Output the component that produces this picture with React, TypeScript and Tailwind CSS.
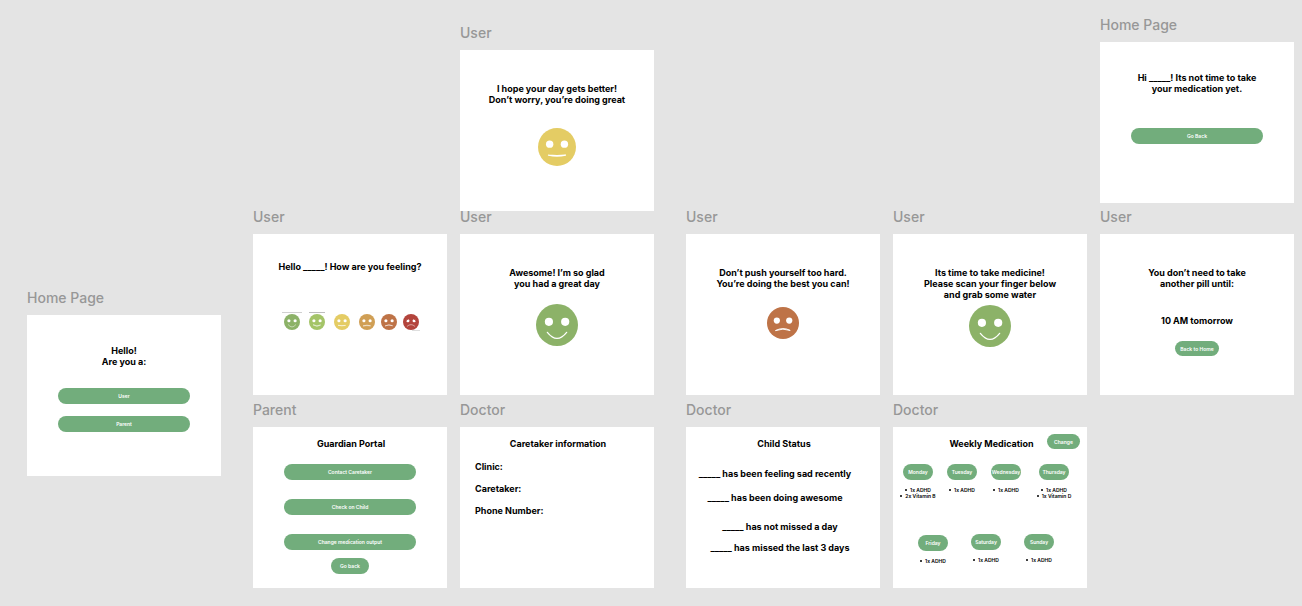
import type { ReactNode } from "react";
import { clsx } from "clsx";

type Mood = "great" | "good" | "okay" | "meh" | "sad" | "awful";

const faces: Record<Mood, { fill: string; mouth: string; label: string }> = {
  great: { fill: "#8cb268", mouth: "M10.8 27 Q20 38.5 29.2 27", label: "Great" },
  good: { fill: "#a4c468", mouth: "M11 27.5 Q20 34.5 29 27.5 Q20 31.5 11 27.5", label: "Good" },
  okay: { fill: "#e4cc64", mouth: "M11 28.5 Q20 29.5 29 28.5 Q20 30.8 11 28.5", label: "Okay" },
  meh: { fill: "#d09f55", mouth: "M11 29.5 Q20 26 29 29.5 Q20 28.5 11 29.5", label: "Not great" },
  sad: { fill: "#be7347", mouth: "M11 29.3 Q20 24.5 29 29.3 Q20 26 11 29.3", label: "Sad" },
  awful: { fill: "#b3443c", mouth: "M10.5 30.5 Q20 22 29.5 30.5", label: "Awful" },
};

function Face({ mood, className }: { mood: Mood; className: string }) {
  const { fill, mouth, label } = faces[mood];
  return (
    <svg viewBox="0 0 40 40" role="img" aria-label={label} className={clsx("block shrink-0", className)}>
      <circle cx="20" cy="20" r="20" fill={fill} />
      <circle cx="12.3" cy="17" r="3.9" fill="#fff" />
      <circle cx="27.8" cy="17" r="3.9" fill="#fff" />
      <path d={mouth} fill="none" stroke="#fff" strokeWidth="1.2" strokeLinecap="round" strokeLinejoin="round" />
      {mood === "awful" && (
        <path d="M7 17 L14 11 M33 17 L26 11" stroke={fill} strokeWidth="2.4" />
      )}
    </svg>
  );
}

function Frame({ name, place, children }: { name: string; place: string; children: ReactNode }) {
  return (
    <section className={clsx("absolute", place)}>
      <h2 className="mb-[7px] text-[14px] leading-5 font-medium text-[#979797]">{name}</h2>
      <div className="flex h-[161px] w-[194px] flex-col items-center bg-white">{children}</div>
    </section>
  );
}

function Title({ className, children }: { className?: string; children: ReactNode }) {
  return (
    <p className={clsx("text-center text-[9px] leading-[11px] font-bold whitespace-nowrap text-black", className)}>
      {children}
    </p>
  );
}

function Pill({ className, children }: { className: string; children: ReactNode }) {
  return (
    <button
      type="button"
      className={clsx(
        "flex shrink-0 items-center justify-center rounded-full bg-[#72ad7c] text-[5px] leading-[6px] font-semibold whitespace-nowrap text-white",
        className,
      )}
    >
      {children}
    </button>
  );
}

function Day({ name, doses, className }: { name: string; doses: string[]; className?: string }) {
  return (
    <div className={clsx("flex w-9 flex-col items-center", className)}>
      <Pill className="h-4 w-[30px]">{name}</Pill>
      <ul className="mt-[7px] text-center text-[5px] leading-[6px] font-semibold whitespace-nowrap text-black">
        {doses.map((dose) => (
          <li key={dose} className="flex items-center justify-center gap-[3px]">
            <span className="size-0.5 rounded-full bg-black" />
            {dose}
          </li>
        ))}
      </ul>
    </div>
  );
}

function MoodButton({ mood, children }: { mood: Mood; children?: ReactNode }) {
  return (
    <button type="button" className="relative">
      <Face mood={mood} className="size-4" />
      {children}
    </button>
  );
}

export default function App() {
  return (
    <main className="relative min-h-screen overflow-hidden bg-[#e4e4e4] font-['Inter',sans-serif]">
      <Frame name="Home Page" place="left-[27px] top-[288px]">
        <Title className="mt-[30px]">
          Hello!
          <br />
          Are you a:
        </Title>
        <Pill className="mt-[21px] h-4 w-[132px]">User</Pill>
        <Pill className="mt-3 h-4 w-[132px]">Parent</Pill>
      </Frame>

      <Frame name="User" place="left-[253px] top-[207px]">
        <Title className="mt-[27px]">Hello _____! How are you feeling?</Title>
        <div className="mt-[42px] flex gap-1.5 pl-[3px]">
          <div className="flex gap-[9px]">
            <MoodButton mood="great">
              <span className="absolute -top-0.5 -left-0.5 h-px w-5 bg-[#d0d0d0]" />
            </MoodButton>
            <MoodButton mood="good">
              <span className="absolute -top-0.5 left-0 h-px w-4 bg-[#bdbdbd]" />
            </MoodButton>
            <MoodButton mood="okay" />
            <MoodButton mood="meh" />
          </div>
          <MoodButton mood="sad" />
          <MoodButton mood="awful">
            <span className="absolute -right-px -bottom-px h-px w-2 bg-[#dedede]" />
          </MoodButton>
        </div>
      </Frame>

      <Frame name="Parent" place="left-[253px] top-[400px]">
        <Title className="mt-[11px] pl-0.5">Guardian Portal</Title>
        <Pill className="mt-[15px] h-4 w-[132px]">Contact Caretaker</Pill>
        <Pill className="mt-[19px] h-4 w-[132px]">Check on Child</Pill>
        <Pill className="mt-[19px] h-4 w-[132px]">Change medication output</Pill>
        <Pill className="mt-2 h-4 w-[38px]">Go back</Pill>
      </Frame>

      <Frame name="User" place="left-[460px] top-[23px]">
        <Title className="mt-[33px]">
          I hope your day gets better!
          <br />
          Don’t worry, you’re doing great
        </Title>
        <Face mood="okay" className="mt-[23px] size-[38px]" />
      </Frame>

      <Frame name="User" place="left-[460px] top-[207px]">
        <Title className="mt-[33px]">
          Awesome! I’m so glad
          <br />
          you had a great day
        </Title>
        <Face mood="great" className="mt-[15px] size-[42px]" />
      </Frame>

      <Frame name="Doctor" place="left-[460px] top-[400px]">
        <Title className="mt-[11px] pl-0.5">Caretaker information</Title>
        <div className="mt-3 flex flex-col items-start gap-[11px] self-start pl-[15px]">
          <Title>Clinic:</Title>
          <Title>Caretaker:</Title>
          <Title>Phone Number:</Title>
        </div>
      </Frame>

      <Frame name="User" place="left-[686px] top-[207px]">
        <Title className="mt-[33px]">
          Don’t push yourself too hard.
          <br />
          You’re doing the best you can!
        </Title>
        <Face mood="sad" className="mt-[18px] size-8" />
      </Frame>

      <Frame name="Doctor" place="left-[686px] top-[400px]">
        <Title className="mt-[11px] pl-0.5">Child Status</Title>
        <div className="mt-[19px] flex flex-col items-center gap-[13px] pr-4">
          <Title>_____ has been feeling sad recently</Title>
          <Title>_____ has been doing awesome</Title>
        </div>
        <div className="mt-[18px] flex flex-col items-center gap-2.5 pr-1.5">
          <Title>_____ has not missed a day</Title>
          <Title>_____ has missed the last 3 days</Title>
        </div>
      </Frame>

      <Frame name="User" place="left-[893px] top-[207px]">
        <Title className="mt-[33px]">
          Its time to take medicine!
          <br />
          Please scan your finger below
          <br />
          and grab some water
        </Title>
        <Face mood="great" className="mt-[5px] size-[42px]" />
      </Frame>

      <Frame name="Doctor" place="left-[893px] top-[400px]">
        <header className="mt-[7px] grid w-full grid-cols-[1fr_auto_1fr] items-end pr-[7px] pl-2.5">
          <Title className="col-start-2">Weekly Medication</Title>
          <Pill className="h-[15px] w-[33px] justify-self-end">Change</Pill>
        </header>
        <div className="mt-[15px] flex w-full gap-2 pl-[7px]">
          <Day name="Monday" doses={["1x ADHD", "2x Vitamin B"]} />
          <Day name="Tuesday" doses={["1x ADHD"]} />
          <Day name="Wednesday" doses={["1x ADHD"]} />
          <Day name="Thursday" doses={["1x ADHD", "1x Vitamin D"]} className="ml-1" />
        </div>
        <div className="mt-[35px] flex w-full gap-[17px] pl-[22px]">
          <Day name="Friday" doses={["1x ADHD"]} className="mt-px" />
          <Day name="Saturday" doses={["1x ADHD"]} />
          <Day name="Sunday" doses={["1x ADHD"]} />
        </div>
      </Frame>

      <Frame name="Home Page" place="left-[1100px] top-[15px]">
        <Title className="mt-[30px]">
          Hi _____! Its not time to take
          <br />
          your medication yet.
        </Title>
        <Pill className="mt-[34px] h-4 w-[132px]">Go Back</Pill>
      </Frame>

      <Frame name="User" place="left-[1100px] top-[207px]">
        <Title className="mt-[33px]">
          You don’t need to take
          <br />
          another pill until:
        </Title>
        <Title className="mt-[26px]">10 AM tomorrow</Title>
        <Pill className="mt-[15px] h-[15px] w-11">Back to Home</Pill>
      </Frame>
    </main>
  );
}
